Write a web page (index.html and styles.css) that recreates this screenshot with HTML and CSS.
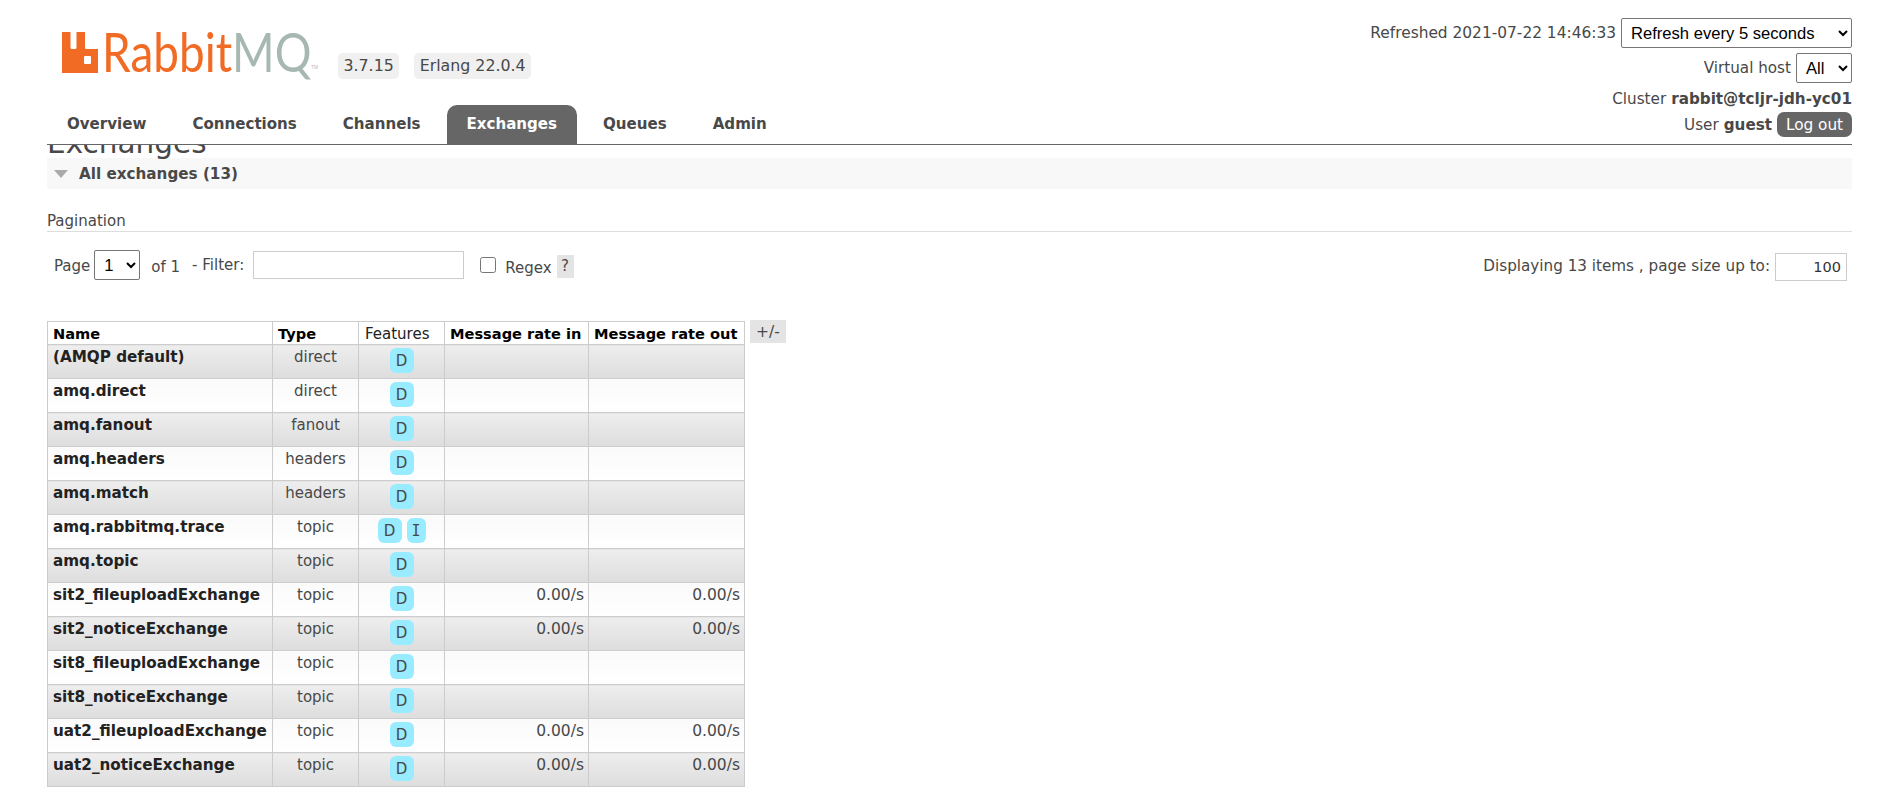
FILE: index.html
```html
<!DOCTYPE html>
<html lang="en">
<head>
<meta charset="utf-8">
<title>RabbitMQ Management</title>
<link rel="stylesheet" href="styles.css">
</head>
<body>
<header class="header">
  <div class="header-top">
    <div class="brand">
      <div class="logo">
        <svg class="logo-mark" viewBox="0 0 36 41" aria-hidden="true"><path fill="#f26b24" d="M0 0h8.5v15.5a1.5 1.5 0 0 0 1.5 1.5h3a1.500 1.500 0 0 0 1.500-1.500V0h8.500v15.500a1.500 1.500 0 0 0 1.500 1.500H36v24H0z"/><rect x="22" y="24" width="7" height="8" rx="1" fill="#fff"/></svg>
        <span class="logo-word"><span class="logo-rabbit">Rabbit</span><span class="logo-mq">MQ</span></span><span class="logo-tm">TM</span>
      </div>
      <span class="version">3.7.15</span>
      <span class="version">Erlang 22.0.4</span>
    </div>
    <nav class="tabs">
      <a class="tab">Overview</a>
      <a class="tab">Connections</a>
      <a class="tab">Channels</a>
      <a class="tab active">Exchanges</a>
      <a class="tab">Queues</a>
      <a class="tab">Admin</a>
    </nav>
  </div>
  <div class="status">
    <div class="status-row first"><span>Refreshed 2021-07-22 14:46:33</span><select class="sel sel-refresh"><option>Refresh every 5 seconds</option></select></div>
    <div class="status-row second"><span>Virtual host</span><select class="sel sel-vhost"><option>All</option></select></div>
    <div class="status-row third"><span>Cluster</span><b>rabbit@tcljr-jdh-yc01</b></div>
    <div class="status-row fourth"><span>User</span><b>guest</b><button class="logout">Log out</button></div>
  </div>
</header>
<main class="main">
  <h1 class="title">Exchanges</h1>
  <section class="section-head"><span class="tri"></span><h2>All exchanges (13)</h2></section>
  <h3 class="pag-title">Pagination</h3>
  <div class="pag">
    <div class="pag-left">
      <label class="l-page">Page</label>
      <select class="sel sel-page"><option>1</option></select>
      <span class="l-of">of 1</span>
      <label class="l-filter">- Filter:</label>
      <input class="filter" type="text">
      <input class="regex" type="checkbox">
      <label class="l-regex">Regex</label>
      <span class="help">?</span>
    </div>
    <div class="pag-right">
      <label>Displaying 13 items , page size up to:</label>
      <input class="size" type="text" value="100">
    </div>
  </div>
  <div class="table-wrap">
    <table class="list">
      <thead>
        <tr><th class="c-name">Name</th><th class="c-type">Type</th><th class="c-feat plain">Features</th><th class="c-in">Message rate in</th><th class="c-out">Message rate out</th></tr>
      </thead>
      <tbody>
        <tr class="odd"><td class="n">(AMQP default)</td><td class="t">direct</td><td class="f"><abbr class="badge">D</abbr></td><td class="r"></td><td class="r"></td></tr>
        <tr class="even"><td class="n">amq.direct</td><td class="t">direct</td><td class="f"><abbr class="badge">D</abbr></td><td class="r"></td><td class="r"></td></tr>
        <tr class="odd"><td class="n">amq.fanout</td><td class="t">fanout</td><td class="f"><abbr class="badge">D</abbr></td><td class="r"></td><td class="r"></td></tr>
        <tr class="even"><td class="n">amq.headers</td><td class="t">headers</td><td class="f"><abbr class="badge">D</abbr></td><td class="r"></td><td class="r"></td></tr>
        <tr class="odd"><td class="n">amq.match</td><td class="t">headers</td><td class="f"><abbr class="badge">D</abbr></td><td class="r"></td><td class="r"></td></tr>
        <tr class="even"><td class="n">amq.rabbitmq.trace</td><td class="t">topic</td><td class="f"><abbr class="badge">D</abbr><abbr class="badge badge-i">I</abbr></td><td class="r"></td><td class="r"></td></tr>
        <tr class="odd"><td class="n">amq.topic</td><td class="t">topic</td><td class="f"><abbr class="badge">D</abbr></td><td class="r"></td><td class="r"></td></tr>
        <tr class="even"><td class="n">sit2_fileuploadExchange</td><td class="t">topic</td><td class="f"><abbr class="badge">D</abbr></td><td class="r">0.00/s</td><td class="r">0.00/s</td></tr>
        <tr class="odd"><td class="n">sit2_noticeExchange</td><td class="t">topic</td><td class="f"><abbr class="badge">D</abbr></td><td class="r">0.00/s</td><td class="r">0.00/s</td></tr>
        <tr class="even"><td class="n">sit8_fileuploadExchange</td><td class="t">topic</td><td class="f"><abbr class="badge">D</abbr></td><td class="r"></td><td class="r"></td></tr>
        <tr class="odd"><td class="n">sit8_noticeExchange</td><td class="t">topic</td><td class="f"><abbr class="badge">D</abbr></td><td class="r"></td><td class="r"></td></tr>
        <tr class="even"><td class="n">uat2_fileuploadExchange</td><td class="t">topic</td><td class="f"><abbr class="badge">D</abbr></td><td class="r">0.00/s</td><td class="r">0.00/s</td></tr>
        <tr class="odd"><td class="n">uat2_noticeExchange</td><td class="t">topic</td><td class="f"><abbr class="badge">D</abbr></td><td class="r">0.00/s</td><td class="r">0.00/s</td></tr>
      </tbody>
    </table>
    <span class="toggle">+/-</span>
  </div>
</main>
</body>
</html>
```
FILE: styles.css
```css
* { box-sizing: border-box; }
html, body { margin: 0; padding: 0; }
html { overflow: hidden; }
body { height: 801px; overflow: hidden; background: #fff; color: #484848; font: 15px "DejaVu Sans", Verdana, sans-serif; }

.header { position: relative; z-index: 2; height: 145px; margin: 0 49px 0 47px; background: #fff; border-bottom: 1px solid #666; display: flex; justify-content: space-between; }
.header-top { display: flex; flex-direction: column; }
.brand { display: flex; align-items: flex-start; height: 105px; padding: 32px 0 0 15px; }
.logo { display: flex; align-items: flex-end; width: 276px; height: 41px; }
.logo-mark { width: 36px; height: 41px; flex: none; }
.logo-word { display: block; flex: none; width: 203px; margin: 0 0 1px 4px; font: 400 54px/41px Lato, sans-serif; white-space: nowrap; transform: scaleX(.85); transform-origin: left center; }
.logo-rabbit { color: #f26b24; }
.logo-mq { color: #a7b8b2; }
.logo-tm { font: 5px/7px "Liberation Sans", sans-serif; color: #bbb; margin: 0 0 2px 6px; }
.version { margin-top: 21px; height: 26px; line-height: 26px; padding: 0 5.500px; background: #f0f0f0; border-radius: 5px; font-size: 15.800px; margin-right: 15px; white-space: nowrap; }
.tabs { display: flex; height: 39px; gap: 6px; }
.tab { height: 39px; line-height: 38px; padding: 0 20px; font-weight: bold; font-size: 15.070px; color: #484848; border-radius: 10px 10px 0 0; }
.tab.active { background: #666; color: #fff; }

.status { display: flex; flex-direction: column; align-items: flex-end; padding-top: 18px; font-size: 15.200px; }
.status-row { display: flex; align-items: center; gap: 5px; white-space: nowrap; }
.status-row.first { height: 30px; font-size: 15.400px; }
.status-row.second { height: 30px; margin-top: 5px; }
.status-row.third { height: 16px; margin-top: 8px; }
.status-row.fourth { height: 25px; margin-top: 5px; }
.sel { appearance: auto; background: #fff; border: 1px solid #767676; border-radius: 2px; color: #000; font: 16.600px "Liberation Sans", Arial, sans-serif; padding: 0 0 0 5px; }
.sel-refresh { width: 231px; height: 30px; }
.sel-vhost { width: 56px; height: 30px; }
.logout { width: 75px; height: 25px; border: 0; padding: 0; background: #666; color: #fff; border-radius: 7px; font: 15.300px "DejaVu Sans", Verdana, sans-serif; }

.main { margin: 0 49px 0 47px; }
.title { margin: -23px 0 0; height: 36px; font-size: 29.500px; line-height: 42px; font-weight: normal; color: #484848; }
.section-head { display: flex; align-items: center; height: 31px; background: #f8f8f8; padding-left: 7px; }
.tri { width: 0; height: 0; border-left: 7.5px solid transparent; border-right: 7.5px solid transparent; border-top: 8px solid #aaa; margin-right: 11px; }
.section-head h2 { margin: 0; font-size: 15.200px; font-weight: bold; color: #484848; }
.pag-title { margin: 23px 0 0; height: 20px; line-height: 19px; border-bottom: 1px solid #ddd; font-size: 15px; font-weight: normal; }
.pag { display: flex; justify-content: space-between; height: 89px; padding-top: 18px; }
.pag-left { display: flex; align-items: flex-start; padding-left: 7px; font-size: 15px; }
.l-page { margin-top: 7px; }
.sel-page { width: 46px; height: 30px; margin-left: 4px; }
.l-of { margin: 8px 0 0 11px; }
.l-filter { margin: 6px 0 0 12px; }
.filter { width: 211px; height: 28px; margin: 1px 0 0 9px; border: 1px solid #ccc; border-radius: 0; outline: 0; background: #fff; }
.regex { width: 16px; height: 16px; margin: 7px 0 0 16px; }
.l-regex { margin: 9px 0 0 9px; }
.help { width: 17px; height: 23px; margin: 5px 0 0 5px; background: #e4e4e4; text-align: center; line-height: 23px; }
.pag-right { display: flex; align-items: flex-start; padding-right: 5px; font-size: 15.200px; }
.pag-right label { margin-top: 7px; }
.size { width: 72px; height: 28px; margin: 3px 0 0 5px; border: 1px solid #ccc; text-align: right; padding: 0 5px; font: 14.500px "DejaVu Sans", Verdana, sans-serif; color: #333; }

.table-wrap { display: flex; align-items: flex-start; gap: 5px; }
.list { border-collapse: collapse; table-layout: fixed; width: 697px; font-size: 15px; color: #484848; }
.list th, .list td { border: 1px solid #ccc; padding: 0 5px; white-space: nowrap; overflow: hidden; }
.list th { height: 23px; text-align: left; color: #000; font-size: 14.600px; font-weight: bold; }
.list th.plain { font-weight: normal; font-size: 15px; text-align: left; padding: 1px 0 0 6px; color: #222; }
.c-name { width: 225px; } .c-type { width: 86px; } .c-feat { width: 86px; } .c-in { width: 144px; } .c-out { width: 156px; }
.list td { height: 34px; vertical-align: top; padding-top: 3px; }
.list .odd td { background: linear-gradient(#eee, #ddd); }
.list .even td { background: linear-gradient(#fafafa, #fff); }
.list td.n { font-weight: bold; color: #222; font-size: 15.200px; }
.list td.t { text-align: center; }
.list td.f { text-align: center; padding: 3px 0 0; font-size: 0; }
.list td.r { text-align: right; padding-right: 4px; font-size: 15.500px; }
.badge { display: inline-block; width: 24px; height: 25px; line-height: 27px; border-radius: 6px; background: #99ebff; font-size: 15px; text-align: center; color: #484848; text-decoration: none; }
.badge-i { width: 19px; margin-left: 5px; font-family: "DejaVu Sans Mono", monospace; }
.toggle { height: 23px; width: 36px; margin-top: -1px; background: #e4e4e4; text-align: center; line-height: 24px; font-size: 15.500px; }
```
